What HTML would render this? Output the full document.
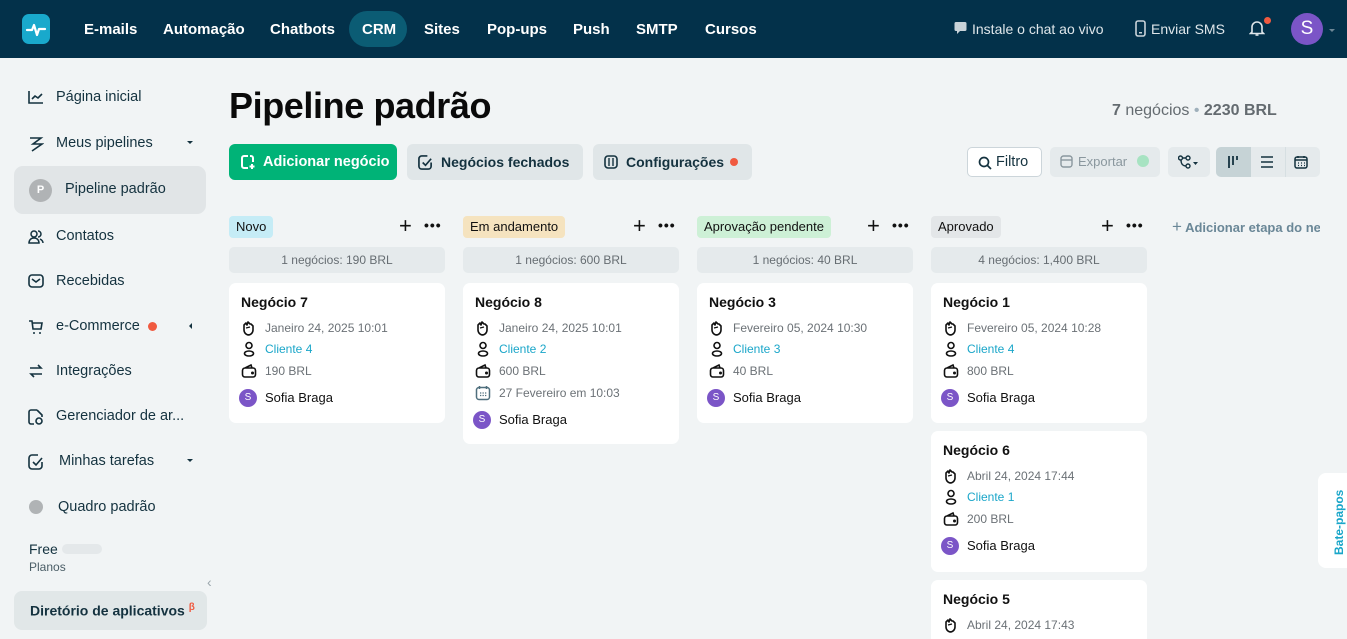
<!DOCTYPE html>
<html><head><meta charset="utf-8"><style>
*{box-sizing:border-box;margin:0;padding:0}
html,body{width:1347px;height:639px;overflow:hidden}
body{background:#f1f4f5;font-family:"Liberation Sans",sans-serif;position:relative;color:#111}
.nav{position:absolute;left:0;top:0;width:1347px;height:58px;background:#03314a}
.logo{position:absolute;left:22px;top:14px;width:28px;height:30px;border-radius:7px;background:#19a9cc}
.nv{position:absolute;top:21px;color:#fff;font-weight:bold;font-size:15px}
.crm{position:absolute;left:349px;top:11px;width:58px;height:36px;border-radius:18px;background:#0b5c74}
.nr{position:absolute;top:21px;color:#dfe6ea;font-size:14px}
.av{position:absolute;left:1291px;top:13px;width:32px;height:32px;border-radius:50%;background:#7b55c7;color:#fff;font-size:19px;text-align:center;line-height:32px}
.si{position:absolute;left:28px;font-size:14.5px;color:#14323f}
.si svg{position:absolute;left:0;top:1px}
.si span{position:absolute;left:28px;top:0;white-space:nowrap}
.sel{position:absolute;left:14px;top:166px;width:192px;height:48px;border-radius:9px;background:#e1e5e7}
h1{position:absolute;left:229px;top:85px;font-size:36px;font-weight:bold;color:#0a0a0a;letter-spacing:-0.4px}
.btn{position:absolute;top:144px;height:36px;border-radius:6px;font-size:14.5px;line-height:36px;color:#14323f;background:#e0e6e8;padding-left:34px;font-weight:bold}
.col{position:absolute;top:216px;width:216px}
.tag{position:absolute;left:0;top:0;height:22px;border-radius:4px;padding:0 7px;font-size:13px;line-height:22px;color:#111}
.pl{position:absolute;top:0;font-size:22px;line-height:20px}
.dots{position:absolute;top:1px;font-size:14px;font-weight:bold;letter-spacing:1px}
.sum{position:absolute;left:0;top:31px;width:216px;height:26px;border-radius:5px;background:#e5eaec;font-size:12px;color:#666d72;text-align:center;line-height:26px}
.card{position:absolute;left:0;width:216px;background:#fff;border-radius:7px}
.ct{position:absolute;left:12px;top:11px;font-size:14px;font-weight:bold;color:#111}
.ln{position:absolute;left:12px;font-size:12px;color:#6b7176;height:16px}
.ln svg{position:absolute;left:0;top:0}
.ln span{position:absolute;left:24px;top:1px;white-space:nowrap}
.ln.c span{color:#1aa6c9}
.own{position:absolute;left:10px;font-size:13px;color:#111}
.own i{position:absolute;left:0;top:0;width:18px;height:18px;border-radius:50%;background:#7b55c7;color:#fff;font-style:normal;font-size:10px;text-align:center;line-height:18px}
.own span{position:absolute;left:26px;top:1px;white-space:nowrap}
</style></head><body>
<div class="nav">
 <div class="logo"><svg width="28" height="30" viewBox="0 0 28 30"><path d="M5 16h5l2-5 3 10 2-6h6" stroke="#fff" stroke-width="2.2" fill="none" stroke-linecap="round" stroke-linejoin="round"/></svg></div>
 <div class="crm"></div>
 <div class="nv" style="left:84px">E-mails</div>
 <div class="nv" style="left:163px">Automação</div>
 <div class="nv" style="left:270px">Chatbots</div>
 <div class="nv" style="left:362px">CRM</div>
 <div class="nv" style="left:424px">Sites</div>
 <div class="nv" style="left:487px">Pop-ups</div>
 <div class="nv" style="left:573px">Push</div>
 <div class="nv" style="left:636px">SMTP</div>
 <div class="nv" style="left:705px">Cursos</div>
 <svg style="position:absolute;left:954px;top:21px" width="13" height="14" viewBox="0 0 13 14"><path d="M2 1h9a1.5 1.5 0 011.5 1.5v6A1.5 1.5 0 0111 10H6l-3 3v-3H2A1.5 1.5 0 01.5 8.5v-6A1.5 1.5 0 012 1z" fill="#c9d3d9"/></svg>
 <div class="nr" style="left:972px">Instale o chat ao vivo</div>
 <svg style="position:absolute;left:1135px;top:20px" width="11" height="17" viewBox="0 0 11 17"><rect x="1" y="1" width="9" height="15" rx="2" fill="none" stroke="#c9d3d9" stroke-width="1.6"/><rect x="4" y="12" width="3" height="1.5" fill="#c9d3d9"/></svg>
 <div class="nr" style="left:1151px">Enviar SMS</div>
 <svg style="position:absolute;left:1249px;top:20px" width="16" height="17" viewBox="0 0 16 17"><path d="M3 12V7a5 5 0 0110 0v5l1.5 1.5h-13z" fill="none" stroke="#dfe6ea" stroke-width="1.6"/><path d="M6.5 15h3" stroke="#dfe6ea" stroke-width="1.6"/></svg>
 <div style="position:absolute;left:1264px;top:17px;width:7px;height:7px;border-radius:50%;background:#f05a40"></div>
 <div class="av">S</div>
 <div style="position:absolute;left:1329px;top:29px;border:3px solid transparent;border-top-color:#6d8796"></div>
</div>

<div class="sel"></div>
<div class="si" style="top:89px"><svg width="16" height="14" viewBox="0 0 16 14"><path d="M1 1v12h14M4 9l3-3 3 2 4-4" fill="none" stroke="#14323f" stroke-width="1.6"/></svg><span>Página inicial</span></div>
<div class="si" style="top:135px"><svg width="16" height="16" viewBox="0 0 16 16"><path d="M2 2h11L5 8h9L4 15" fill="none" stroke="#14323f" stroke-width="1.6"/></svg><span>Meus pipelines</span></div>
<div style="position:absolute;left:187px;top:141px;border:3px solid transparent;border-top-color:#14323f"></div>
<div style="position:absolute;left:29px;top:179px;width:23px;height:23px;border-radius:50%;background:#b0b3b5;color:#fff;font-size:11px;font-weight:bold;text-align:center;line-height:23px">P</div>
<div class="si" style="top:181px;left:65px"><span style="left:0">Pipeline padrão</span></div>
<div class="si" style="top:228px"><svg width="16" height="16" viewBox="0 0 16 16"><circle cx="6" cy="5" r="3" fill="none" stroke="#14323f" stroke-width="1.5"/><path d="M1 14c0-3 2-5 5-5s5 2 5 5zM10 2a3 3 0 010 6M12 10c2 1 3 2 3 4" fill="none" stroke="#14323f" stroke-width="1.5"/></svg><span>Contatos</span></div>
<div class="si" style="top:273px"><svg width="16" height="14" viewBox="0 0 16 14"><rect x="1" y="1" width="14" height="12" rx="3" fill="none" stroke="#14323f" stroke-width="1.6"/><path d="M4 5l4 3 4-3" fill="none" stroke="#14323f" stroke-width="1.6"/></svg><span>Recebidas</span></div>
<div class="si" style="top:318px"><svg width="16" height="16" viewBox="0 0 16 16"><path d="M1 2h3l1 8h8l1-6H5" fill="none" stroke="#14323f" stroke-width="1.6"/><circle cx="6" cy="14" r="1" fill="#14323f"/><circle cx="12" cy="14" r="1" fill="#14323f"/></svg><span>e-Commerce</span></div>
<div style="position:absolute;left:148px;top:322px;width:9px;height:9px;border-radius:50%;background:#f05a40"></div>
<div style="position:absolute;left:186px;top:323px;border:3px solid transparent;border-right-color:#14323f"></div>
<div class="si" style="top:363px"><svg width="16" height="14" viewBox="0 0 16 14"><path d="M2 4h11l-3-3M14 10H3l3 3" fill="none" stroke="#14323f" stroke-width="1.6"/></svg><span>Integrações</span></div>
<div class="si" style="top:408px"><svg width="16" height="16" viewBox="0 0 16 16"><path d="M9 1H3a2 2 0 00-2 2v10a2 2 0 002 2h3M9 1l5 5v2" fill="none" stroke="#14323f" stroke-width="1.6"/><circle cx="11" cy="12" r="3" fill="none" stroke="#14323f" stroke-width="1.6"/></svg><span>Gerenciador de ar...</span></div>
<div class="si" style="top:453px"><svg width="16" height="16" viewBox="0 0 16 16"><path d="M14 8v4a3 3 0 01-3 3H4a3 3 0 01-3-3V4a3 3 0 013-3h6" fill="none" stroke="#14323f" stroke-width="1.6"/><path d="M5 8l3 3 6-7" fill="none" stroke="#14323f" stroke-width="1.6"/></svg><span style="left:31px">Minhas tarefas</span></div>
<div style="position:absolute;left:187px;top:459px;border:3px solid transparent;border-top-color:#14323f"></div>
<div style="position:absolute;left:29px;top:500px;width:14px;height:14px;border-radius:50%;background:#b0b3b5"></div>
<div class="si" style="top:499px;left:58px"><span style="left:0">Quadro padrão</span></div>
<div style="position:absolute;left:29px;top:541px;font-size:14px;color:#14323f">Free</div>
<div style="position:absolute;left:62px;top:544px;width:40px;height:10px;border-radius:5px;background:#e4e8ea"></div>
<div style="position:absolute;left:29px;top:560px;font-size:12px;color:#4a5d66">Planos</div>
<div style="position:absolute;left:207px;top:574px;font-size:14px;color:#9aa5ab">&lsaquo;</div>
<div style="position:absolute;left:14px;top:591px;width:193px;height:39px;border-radius:8px;background:#e1e7e8"></div>
<div style="position:absolute;left:30px;top:602px;font-size:14px;font-weight:bold;color:#14323f">Diretório de aplicativos <sup style="color:#f05a40;font-size:10px">β</sup></div>

<h1>Pipeline padrão</h1>
<div style="position:absolute;left:1112px;top:102px;font-size:16px;color:#646b70"><b>7</b> negócios <span style="color:#9fb0bb">•</span> <b>2230 BRL</b></div>

<div class="btn" style="left:229px;width:168px;background:#00b377;color:#fff">Adicionar negócio<svg style="position:absolute;left:11px;top:10px" width="16" height="16" viewBox="0 0 16 16"><path d="M8 2H4a2 2 0 00-2 2v8a2 2 0 002 2h4M13 8V4a2 2 0 00-2-2h-1" fill="none" stroke="#fff" stroke-width="2"/><path d="M12 10v5M9.5 12.5h5" stroke="#fff" stroke-width="2"/></svg></div>
<div class="btn" style="left:407px;width:176px;font-size:14px">Negócios fechados<svg style="position:absolute;left:11px;top:11px" width="15" height="15" viewBox="0 0 16 16"><path d="M14 8v4a3 3 0 01-3 3H4a3 3 0 01-3-3V4a3 3 0 013-3h6" fill="none" stroke="#14323f" stroke-width="1.8"/><path d="M5 8l3 3 6-7" fill="none" stroke="#14323f" stroke-width="1.8"/></svg></div>
<div class="btn" style="left:593px;width:159px;padding-left:33px;font-size:14px">Configurações<svg style="position:absolute;left:11px;top:11px" width="14" height="14" viewBox="0 0 14 14"><rect x="1" y="1" width="12" height="12" rx="3" fill="none" stroke="#14323f" stroke-width="1.6"/><path d="M5 3v8M9 3v8" stroke="#14323f" stroke-width="1.4"/></svg><span style="position:absolute;left:137px;top:14px;width:8px;height:8px;border-radius:50%;background:#f05a40"></span></div>

<div style="position:absolute;left:967px;top:147px;width:75px;height:30px;border:1px solid #ccd5da;border-radius:5px;background:#fff;font-size:14.5px;line-height:28px;padding-left:28px;color:#14323f">Filtro<svg style="position:absolute;left:10px;top:8px" width="14" height="14" viewBox="0 0 14 14"><circle cx="6" cy="6" r="4.5" fill="none" stroke="#14323f" stroke-width="1.7"/><path d="M9.5 9.5L13 13" stroke="#14323f" stroke-width="1.7"/></svg></div>
<div style="position:absolute;left:1050px;top:147px;width:110px;height:30px;border-radius:5px;background:#e5eaec;font-size:13px;line-height:30px;padding-left:28px;color:#8a979e">Exportar<svg style="position:absolute;left:10px;top:8px" width="13" height="13" viewBox="0 0 13 13"><rect x="1" y="1" width="11" height="11" rx="2.5" fill="none" stroke="#8a979e" stroke-width="1.4"/><path d="M1 5h11" stroke="#8a979e" stroke-width="1.4"/></svg><span style="position:absolute;left:87px;top:8px;width:12px;height:12px;border-radius:50%;background:#a7e3c2"></span></div>
<div style="position:absolute;left:1168px;top:147px;width:42px;height:30px;border-radius:5px;background:#e5eaec"><svg style="position:absolute;left:10px;top:8px" width="22" height="14" viewBox="0 0 22 14"><circle cx="2.5" cy="3" r="2" fill="none" stroke="#14323f" stroke-width="1.4"/><circle cx="10" cy="3" r="2" fill="none" stroke="#14323f" stroke-width="1.4"/><circle cx="10" cy="11" r="2" fill="none" stroke="#14323f" stroke-width="1.4"/><path d="M4.5 3h3.5M3 5c0 5 3 6 5 6" fill="none" stroke="#14323f" stroke-width="1.4"/><path d="M15 7l2.5 3 2.5-3z" fill="#14323f"/></svg></div>
<div style="position:absolute;left:1216px;top:147px;width:104px;height:30px;border-radius:5px;background:#e5eaec"><div style="position:absolute;left:0;top:0;width:35px;height:30px;background:#c6d3d6;border-radius:5px 0 0 5px"></div><div style="position:absolute;left:69px;top:0;width:1px;height:30px;background:#d6dfe2"></div>
<svg style="position:absolute;left:11px;top:8px" width="14" height="14" viewBox="0 0 14 14"><path d="M2 1v12M6 1v9M10 1v4" stroke="#14323f" stroke-width="1.8"/></svg>
<svg style="position:absolute;left:44px;top:8px" width="14" height="14" viewBox="0 0 14 14"><path d="M1 2h12M1 7h12M1 12h12" stroke="#14323f" stroke-width="1.6"/></svg>
<svg style="position:absolute;left:78px;top:8px" width="14" height="14" viewBox="0 0 14 14"><rect x="1" y="2" width="12" height="11" rx="2" fill="none" stroke="#14323f" stroke-width="1.5"/><path d="M1 5h12M4 1v2M10 1v2" stroke="#14323f" stroke-width="1.5"/><path d="M4 8h1M7 8h1M10 8h1M4 10.5h1M7 10.5h1M10 10.5h1" stroke="#14323f" stroke-width="1.2"/></svg></div>

<svg width="0" height="0" style="position:absolute"><defs>
<symbol id="ih" viewBox="0 0 16 16"><path d="M3 9V5l2-2 1 2 1-3 2 2 1 0 2 2v4a5 5 0 01-5 5H8a5 5 0 01-5-5z" fill="none" stroke="#111" stroke-width="1.6" stroke-linejoin="round"/><path d="M5 8l4-1" stroke="#111" stroke-width="1.4"/></symbol>
<symbol id="iu" viewBox="0 0 16 16"><circle cx="8" cy="4.5" r="3" fill="none" stroke="#111" stroke-width="1.6"/><ellipse cx="8" cy="12.5" rx="4.5" ry="2.5" fill="none" stroke="#111" stroke-width="1.6"/></symbol>
<symbol id="iw" viewBox="0 0 16 16"><path d="M12 5H4a2.5 2.5 0 00-2.5 2.5v4A2.5 2.5 0 004 14h8a2.5 2.5 0 002.5-2.5v-4A2.5 2.5 0 0012 5zM4 5l6-3 1 3" fill="none" stroke="#111" stroke-width="1.6"/><circle cx="11.5" cy="10" r="1.5" fill="#111"/></symbol>
<symbol id="ic" viewBox="0 0 16 16"><rect x="1.5" y="2.5" width="13" height="12" rx="2.5" fill="none" stroke="#4f6f7d" stroke-width="1.5"/><path d="M4.5 1v3M11.5 1v3" stroke="#4f6f7d" stroke-width="1.5"/><path d="M5 8h1.3M7.5 8h1.3M10 8h1.3M5 10.5h1.3M7.5 10.5h1.3M10 10.5h1.3" stroke="#4f6f7d" stroke-width="1.3"/></symbol>
</defs></svg>

<div class="col" style="left:229px">
 <div class="tag" style="background:#c5ecf6">Novo</div><div class="pl" style="left:170px">+</div><div class="dots" style="left:195px">•••</div>
 <div class="sum">1 negócios: 190 BRL</div>
 <div class="card" style="top:67px;height:140px"><div class="ct">Negócio 7</div>
  <div class="ln" style="top:37px"><svg width="16" height="16"><use href="#ih"/></svg><span>Janeiro 24, 2025 10:01</span></div>
  <div class="ln c" style="top:58px"><svg width="16" height="16"><use href="#iu"/></svg><span>Cliente 4</span></div>
  <div class="ln" style="top:80px"><svg width="16" height="16"><use href="#iw"/></svg><span>190 BRL</span></div>
  <div class="own" style="top:106px"><i>S</i><span>Sofia Braga</span></div></div>
</div>
<div class="col" style="left:463px">
 <div class="tag" style="background:#f5e3bf">Em andamento</div><div class="pl" style="left:170px">+</div><div class="dots" style="left:195px">•••</div>
 <div class="sum">1 negócios: 600 BRL</div>
 <div class="card" style="top:67px;height:161px"><div class="ct">Negócio 8</div>
  <div class="ln" style="top:37px"><svg width="16" height="16"><use href="#ih"/></svg><span>Janeiro 24, 2025 10:01</span></div>
  <div class="ln c" style="top:58px"><svg width="16" height="16"><use href="#iu"/></svg><span>Cliente 2</span></div>
  <div class="ln" style="top:80px"><svg width="16" height="16"><use href="#iw"/></svg><span>600 BRL</span></div>
  <div class="ln" style="top:102px"><svg width="16" height="16"><use href="#ic"/></svg><span>27 Fevereiro em 10:03</span></div>
  <div class="own" style="top:128px"><i>S</i><span>Sofia Braga</span></div></div>
</div>
<div class="col" style="left:697px">
 <div class="tag" style="background:#cdf0d6">Aprovação pendente</div><div class="pl" style="left:170px">+</div><div class="dots" style="left:195px">•••</div>
 <div class="sum">1 negócios: 40 BRL</div>
 <div class="card" style="top:67px;height:140px"><div class="ct">Negócio 3</div>
  <div class="ln" style="top:37px"><svg width="16" height="16"><use href="#ih"/></svg><span>Fevereiro 05, 2024 10:30</span></div>
  <div class="ln c" style="top:58px"><svg width="16" height="16"><use href="#iu"/></svg><span>Cliente 3</span></div>
  <div class="ln" style="top:80px"><svg width="16" height="16"><use href="#iw"/></svg><span>40 BRL</span></div>
  <div class="own" style="top:106px"><i>S</i><span>Sofia Braga</span></div></div>
</div>
<div class="col" style="left:931px">
 <div class="tag" style="background:#e3e6e8">Aprovado</div><div class="pl" style="left:170px">+</div><div class="dots" style="left:195px">•••</div>
 <div class="sum">4 negócios: 1,400 BRL</div>
 <div class="card" style="top:67px;height:140px"><div class="ct">Negócio 1</div>
  <div class="ln" style="top:37px"><svg width="16" height="16"><use href="#ih"/></svg><span>Fevereiro 05, 2024 10:28</span></div>
  <div class="ln c" style="top:58px"><svg width="16" height="16"><use href="#iu"/></svg><span>Cliente 4</span></div>
  <div class="ln" style="top:80px"><svg width="16" height="16"><use href="#iw"/></svg><span>800 BRL</span></div>
  <div class="own" style="top:106px"><i>S</i><span>Sofia Braga</span></div></div>
 <div class="card" style="top:215px;height:141px"><div class="ct">Negócio 6</div>
  <div class="ln" style="top:37px"><svg width="16" height="16"><use href="#ih"/></svg><span>Abril 24, 2024 17:44</span></div>
  <div class="ln c" style="top:58px"><svg width="16" height="16"><use href="#iu"/></svg><span>Cliente 1</span></div>
  <div class="ln" style="top:80px"><svg width="16" height="16"><use href="#iw"/></svg><span>200 BRL</span></div>
  <div class="own" style="top:106px"><i>S</i><span>Sofia Braga</span></div></div>
 <div class="card" style="top:364px;height:70px"><div class="ct">Negócio 5</div>
  <div class="ln" style="top:37px"><svg width="16" height="16"><use href="#ih"/></svg><span>Abril 24, 2024 17:43</span></div></div>
</div>

<div style="position:absolute;left:1172px;top:217px;font-size:13px;font-weight:bold;color:#6a8797;white-space:nowrap;width:148px;overflow:hidden"><span style="font-size:17px;font-weight:normal">+</span> Adicionar etapa do negócio</div>

<div style="position:absolute;left:1318px;top:473px;width:40px;height:95px;border-radius:8px;background:#fff"></div>
<div style="position:absolute;left:1332px;top:555px;transform:rotate(-90deg);transform-origin:0 0;font-size:12px;font-weight:bold;color:#1aa6c9;white-space:nowrap">Bate-papos</div>
</body></html>
